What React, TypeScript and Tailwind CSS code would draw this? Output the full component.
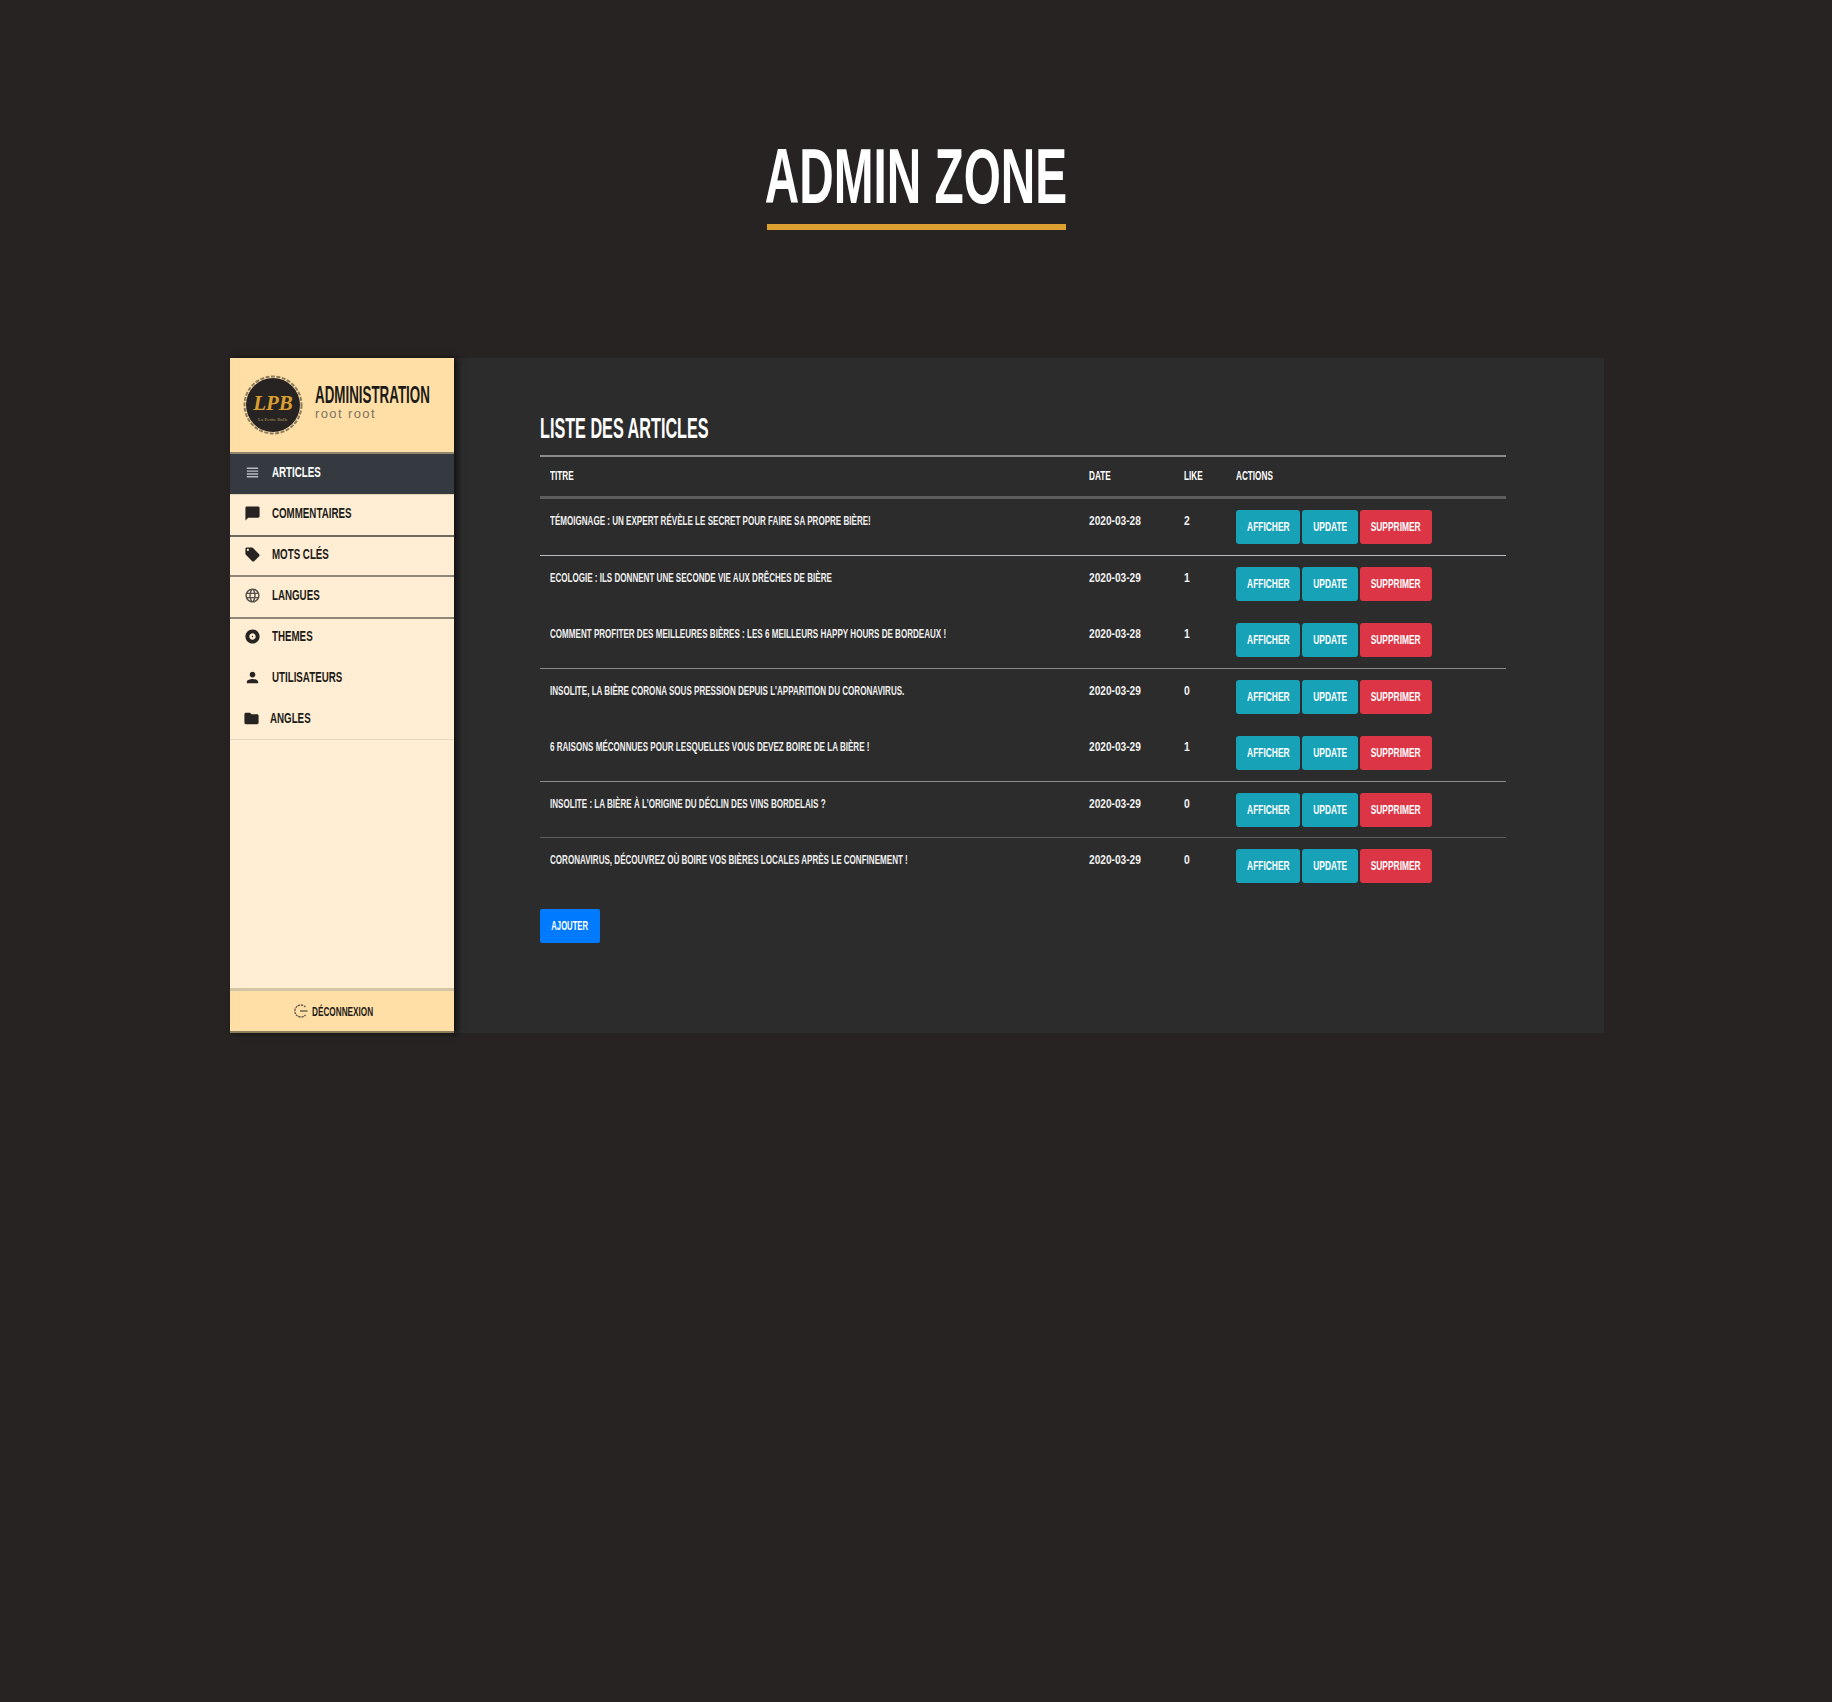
import React from 'react';
import { MdViewHeadline, MdChatBubble, MdLocalOffer, MdLanguage, MdAlbum, MdPerson, MdFolder } from 'react-icons/md';

const menu = [
  { label: 'Articles', icon: MdViewHeadline, active: true, row: 'h-[40px] pb-[3px] bg-[#343a40] text-white', iconCls: 'text-[#b9bcbe]' },
  { label: 'Commentaires', icon: MdChatBubble, row: 'h-[41px] pb-[3px] border-t border-[#e3d2b4]' },
  { label: 'Mots clés', icon: MdLocalOffer, row: 'h-[40px] pb-[3px] border-t-2 border-[#6f6a60]' },
  { label: 'Langues', icon: MdLanguage, row: 'h-[42px] pb-[3px] border-t-2 border-[#8e8677]', iconCls: 'text-[#55524c]' },
  { label: 'Themes', icon: MdAlbum, row: 'h-[41px] pb-[4px] border-t-2 border-[#8e8677]' },
  { label: 'Utilisateurs', icon: MdPerson, row: 'h-[41px] pb-[3px]' },
  { label: 'Angles', icon: MdFolder, row: 'h-[40px] pb-[1px]', gap: 'gap-[10px] pl-[13px]' },
];

const articles = [
  { title: 'Témoignage : un expert révèle le secret pour faire sa propre bière!', date: '2020-03-28', like: 2, line: 'border-[#b9bcbe]' },
  { title: 'Ecologie : ils donnent une seconde vie aux drêches de bière', date: '2020-03-29', like: 1, line: 'border-transparent' },
  { title: 'Comment profiter des meilleures bières : les 6 meilleurs happy hours de Bordeaux !', date: '2020-03-28', like: 1, line: 'border-[#8a8a8a]' },
  { title: "Insolite, la bière Corona sous pression depuis l'apparition du coronavirus.", date: '2020-03-29', like: 0, line: 'border-transparent' },
  { title: '6 raisons méconnues pour lesquelles vous devez boire de la bière !', date: '2020-03-29', like: 1, line: 'border-[#8a8a8a]' },
  { title: 'Insolite : la bière à l’origine du déclin des vins bordelais ?', date: '2020-03-29', like: 0, line: 'border-[#5c5c5c]' },
  { title: 'Coronavirus, découvrez où boire vos bières locales après le confinement !', date: '2020-03-29', like: 0, line: 'border-transparent' },
];

// Bebas Neue n'est pas dispo : Liberation Sans écrasée en largeur
function Narrow({ children, className = '' }: { children: React.ReactNode; className?: string }) {
  return <span className={`inline-block whitespace-nowrap uppercase origin-left ${className}`}>{children}</span>;
}

function ActionButton({ label, className }: { label: string; className: string }) {
  return (
    <button className={`flex h-[34px] items-center justify-center rounded-[3px] text-[12px] font-bold text-white ${className}`}>
      <span className="inline-block whitespace-nowrap uppercase scale-x-[0.7]">{label}</span>
    </button>
  );
}

function Logo() {
  return (
    <svg width="60" height="60" viewBox="0 0 60 60" className="shrink-0">
      <circle cx="30" cy="30" r="28.5" fill="none" stroke="#8a7c5e" strokeWidth="2" strokeDasharray="4 1.5" />
      <circle cx="30" cy="30" r="27" fill="#262322" />
      <text x="30" y="35" textAnchor="middle" fontFamily="'Liberation Serif', serif" fontStyle="italic" fontWeight="700" fontSize="21" fill="#d99f2f">LPB</text>
      <text x="30" y="46" textAnchor="middle" fontFamily="'Liberation Serif', serif" fontSize="5" fill="#b89a5a">La Petite Bulle</text>
    </svg>
  );
}

function LogoutIcon() {
  return (
    <svg width="14" height="14" viewBox="0 0 14 14" fill="none" stroke="#5a5346" strokeWidth="1.3" className="shrink-0">
      <path d="M11.5 3.2A6 6 0 1 0 11.5 10.8" strokeDasharray="2.2 0.8" />
      <path d="M6 7h7.5" />
    </svg>
  );
}

export default function App() {
  return (
    <div className="flex min-h-[1702px] flex-col items-center bg-[#262322] font-['Liberation_Sans',sans-serif]">
      <div className="mt-[136px] flex h-[94px] w-[299px] flex-col border-b-[6px] border-[#dd9f2f]">
        <h1 className="flex h-[88px] justify-center text-[78px] font-bold leading-[80px] text-white">
          <span className="inline-block shrink-0 whitespace-nowrap scale-x-[0.612]">ADMIN ZONE</span>
        </h1>
      </div>

      <div className="ml-[2px] mt-[128px] flex h-[675px] w-[1374px]">
        <aside className="z-10 flex w-[224px] shrink-0 flex-col bg-[#ffeed3] shadow-[4px_0_6px_rgba(0,0,0,0.6)]">
          <div className="flex h-[96px] items-center gap-[12px] border-b-2 border-[#8f8672] bg-[#ffdfa6] pl-[13px]">
            <Logo />
            <div className="-mt-[7px] flex flex-col">
              <Narrow className="scale-x-[0.557] text-[24px] font-bold leading-[24px] text-[#1d1b18]">Administration</Narrow>
              <span className="text-[13px] font-light leading-[13px] tracking-[1.4px] text-[#7d7263]">root root</span>
            </div>
          </div>
          <nav className="flex flex-col text-[#1d1b18]">
            {menu.map((m) => {
              const Icon = m.icon;
              return (
                <div key={m.label} className={`flex items-center ${m.gap ?? 'gap-[11px] pl-[14px]'} ${m.row}`}>
                  <Icon size={17} className={`shrink-0 ${m.iconCls ?? 'text-[#262322]'}`} />
                  <Narrow className="scale-x-[0.65] text-[15px] font-bold">{m.label}</Narrow>
                </div>
              );
            })}
          </nav>
          <div className="h-px bg-[#e3d8c3]" />
          <div className="flex-1" />
          <div className="flex h-[45px] items-center justify-center gap-[4px] border-t-[3px] border-b-2 border-t-[#d4c5a6] border-b-[#8a7d5e] bg-[#ffdfa6] pr-[18px] text-[#1d1b18]">
            <LogoutIcon />
            <span className="w-[61px]">
              <Narrow className="scale-x-[0.685] text-[12px] font-bold">Déconnexion</Narrow>
            </span>
          </div>
        </aside>

        <main className="flex-1 bg-[#2c2c2c] pl-[86px] pr-[98px] pt-[55px] text-white">
          <h2 className="h-[42px] text-[30px] font-bold leading-[30px]">
            <Narrow className="scale-x-[0.54]">Liste des articles</Narrow>
          </h2>
          <div className="grid h-[44px] grid-cols-[539px_95px_52px_1fr] items-center border-t-2 border-b-[3px] border-t-[#8a8a8a] border-b-[#5e5e5e] pb-[2px] text-[13px] font-bold">
            <div className="pl-[10px]"><Narrow className="scale-x-[0.63]">Titre</Narrow></div>
            <div className="pl-[10px]"><Narrow className="scale-x-[0.63]">Date</Narrow></div>
            <div className="pl-[10px]"><Narrow className="scale-x-[0.63]">Like</Narrow></div>
            <div className="pl-[10px]"><Narrow className="scale-x-[0.63]">Actions</Narrow></div>
          </div>
          {articles.map((a) => (
            <div key={a.title} className={`grid h-[56.5px] grid-cols-[539px_95px_52px_1fr] border-b pt-[12px] text-[13px] font-bold text-[#f0f0f0] ${a.line}`}>
              <div className="pl-[10px]"><Narrow className="scale-x-[0.62]">{a.title}</Narrow></div>
              <div className="pl-[10px]"><Narrow className="scale-x-[0.78]">{a.date}</Narrow></div>
              <div className="pl-[10px]"><Narrow className="scale-x-[0.8]">{a.like}</Narrow></div>
              <div className="flex gap-[2px] pl-[10px] -mt-[1px]">
                <ActionButton label="Afficher" className="w-[64px] bg-[#17a2b8]" />
                <ActionButton label="Update" className="w-[56px] bg-[#17a2b8]" />
                <ActionButton label="Supprimer" className="w-[72px] bg-[#dc3545]" />
              </div>
            </div>
          ))}
          <button className="mt-[14px] flex h-[34px] w-[60px] items-center justify-center rounded-[2px] bg-[#007bff] text-[12px] font-bold text-white">
            <span className="inline-block whitespace-nowrap uppercase scale-x-[0.64]">Ajouter</span>
          </button>
        </main>
      </div>
    </div>
  );
}
